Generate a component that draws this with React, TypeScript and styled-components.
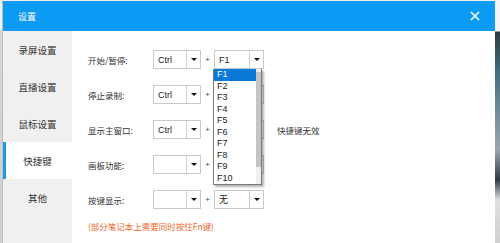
import React from "react";
import styled, { createGlobalStyle } from "styled-components";

const GlobalStyle = createGlobalStyle`
    html, body {
        margin: 0;
        padding: 0;
        background: #e6e6e6;
    }
    body {
        font-family: "Noto Sans CJK SC", "Noto Sans", sans-serif;
    }
`;

const Shell = styled.div`
    width: 500px;
    height: 243px;
    display: flex;
    overflow: hidden;
    background: #eeeeee;
`;

const LeftEdge = styled.div`
    width: 3px;
    background: linear-gradient(to bottom, #f2f2f2 0, #f2f2f2 30px, #d6d6d6 31px, #cfcfcf 100%);
    border-right: 1px solid #bdbdbd;
    box-sizing: border-box;
`;

const RightEdge = styled.div`
    width: 5px;
    background: linear-gradient(
        to bottom,
        #f4f4f4 0,
        #f4f4f4 31px,
        #2d3a40 32px,
        #3f6d78 70px,
        #6f8c98 110px,
        #9aa6ad 150px,
        #2f3b44 180px,
        #e0e0e0 200px,
        #cfcfcf 100%
    );
`;

const Dialog = styled.div`
    flex: 1;
    display: flex;
    flex-direction: column;
    padding-top: 1px;
    background: #f2f2f2;
`;

const Header = styled.header`
    height: 30px;
    background-color: #0b9bf4;
    display: flex;
    align-items: center;
    padding: 0 14px 0 15px;
    color: #fff;
    font-size: 9px;
`;

const CloseButton = styled.button`
    margin-left: auto;
    background: none;
    border: none;
    padding: 0;
    width: 12px;
    height: 12px;
    display: flex;
    align-items: center;
    justify-content: center;
    cursor: pointer;
`;

const Body = styled.div`
    flex: 1;
    display: flex;
    background: #fff;
`;

const Sidebar = styled.nav`
    width: 69px;
    background: #f0f0f0;
    display: flex;
    flex-direction: column;
`;

const NavItem = styled.div<{ active?: boolean }>`
    height: 37px;
    display: flex;
    align-items: center;
    justify-content: center;
    font-size: 9.5px;
    color: #333;
    background: ${(p) => (p.active ? "#fff" : "transparent")};
    border-left: 3px solid ${(p) => (p.active ? "#1a9be6" : "transparent")};
    padding-right: 3px;
`;

const Content = styled.section`
    flex: 1;
    position: relative;
    padding: 19px 0 0 16px;
    display: flex;
    flex-direction: column;
    gap: 16px;
`;

const Row = styled.div`
    height: 19px;
    display: flex;
    align-items: center;
`;

const Label = styled.span`
    width: 65px;
    font-size: 8.5px;
    color: #333;
`;

const Select = styled.div<{ width: number }>`
    width: ${(p) => p.width}px;
    height: 19px;
    box-sizing: border-box;
    border: 1px solid #c9c9c9;
    display: flex;
    background: #fff;
`;

const SelectValue = styled.span`
    flex: 1;
    display: flex;
    align-items: center;
    padding-left: 4px;
    font-family: "Liberation Sans", "Noto Sans CJK SC", sans-serif;
    font-size: 9px;
    color: #222;
`;

const ArrowBox = styled.span`
    width: 13px;
    border-left: 1px solid #d0d0d0;
    display: flex;
    align-items: center;
    justify-content: center;

    &::after {
        content: "";
        border-left: 3px solid transparent;
        border-right: 3px solid transparent;
        border-top: 3px solid #111;
    }
`;

const Plus = styled.span`
    width: 13px;
    text-align: center;
    font-family: "Liberation Sans", sans-serif;
    font-size: 8px;
    color: #444;
`;

const Hint = styled.span`
    margin-left: 13px;
    font-size: 8.5px;
    color: #333;
`;

const Note = styled.p`
    margin: -5px 0 0;
    font-size: 8.5px;
    color: #ef6a2e;
`;

const DropList = styled.div`
    position: absolute;
    left: 141px;
    top: 38px;
    width: 49px;
    height: 116px;
    box-sizing: border-box;
    border: 1px solid #7a7a7a;
    border-top: none;
    background: #fff;
    box-shadow: 2px 2px 2px rgba(0, 0, 0, 0.3);
    display: flex;
`;

const Options = styled.ul`
    flex: 1;
    margin: 0;
    padding: 0;
    list-style: none;
`;

const Option = styled.li<{ selected?: boolean }>`
    height: 11.5px;
    line-height: 11.5px;
    padding-left: 3px;
    font-family: "Liberation Sans", sans-serif;
    font-size: 9px;
    color: ${(p) => (p.selected ? "#fff" : "#222")};
    background: ${(p) => (p.selected ? "#0a78d7" : "transparent")};
`;

const ScrollTrack = styled.div`
    width: 5px;
    background: #f0f0f0;
    padding-top: 3px;
    box-sizing: border-box;
`;

const ScrollThumb = styled.div`
    height: 95px;
    background: #c4c4c4;
`;

const navItems = ["录屏设置", "直播设置", "鼠标设置", "快捷键", "其他"];
const fKeys = ["F1", "F2", "F3", "F4", "F5", "F6", "F7", "F8", "F9", "F10"];

interface ShortcutRow {
    label: string;
    mod: string;
    key: string;
    hint?: string;
}

const rows: ShortcutRow[] = [
    { label: "开始/暂停:", mod: "Ctrl", key: "F1" },
    { label: "停止录制:", mod: "Ctrl", key: "" },
    { label: "显示主窗口:", mod: "Ctrl", key: "", hint: "快捷键无效" },
    { label: "画板功能:", mod: "", key: "" },
    { label: "按键显示:", mod: "", key: "无" },
];

const App: React.FC = () => {
    return (
        <Shell>
            <GlobalStyle />
            <LeftEdge />
            <Dialog>
                <Header>
                    <span>设置</span>
                    <CloseButton aria-label="close">
                        <svg width="10" height="10" viewBox="0 0 10 10">
                            <path d="M1 1 L9 9 M9 1 L1 9" stroke="#fff" strokeWidth="1.6" />
                        </svg>
                    </CloseButton>
                </Header>
                <Body>
                    <Sidebar>
                        {navItems.map((item) => (
                            <NavItem key={item} active={item === "快捷键"}>
                                {item}
                            </NavItem>
                        ))}
                    </Sidebar>
                    <Content>
                        {rows.map((row) => (
                            <Row key={row.label}>
                                <Label>{row.label}</Label>
                                <Select width={48}>
                                    <SelectValue>{row.mod}</SelectValue>
                                    <ArrowBox />
                                </Select>
                                <Plus>+</Plus>
                                <Select width={50}>
                                    <SelectValue>{row.key}</SelectValue>
                                    <ArrowBox />
                                </Select>
                                {row.hint ? <Hint>{row.hint}</Hint> : null}
                            </Row>
                        ))}
                        <Note>(部分笔记本上需要同时按住Fn键)</Note>
                        <DropList>
                            <Options>
                                {fKeys.map((k) => (
                                    <Option key={k} selected={k === "F1"}>
                                        {k}
                                    </Option>
                                ))}
                            </Options>
                            <ScrollTrack>
                                <ScrollThumb />
                            </ScrollTrack>
                        </DropList>
                    </Content>
                </Body>
            </Dialog>
            <RightEdge />
        </Shell>
    );
};

export default App;
